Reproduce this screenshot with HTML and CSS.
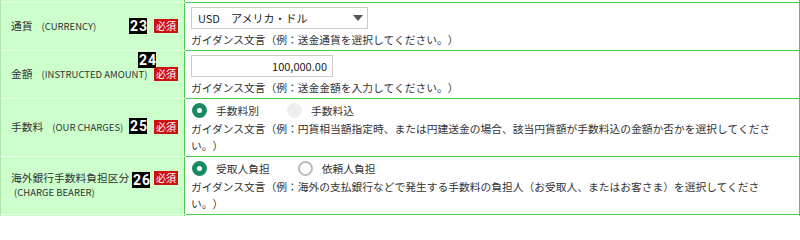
FILE: index.html
```html
<!DOCTYPE html>
<html lang="ja">
<head>
<meta charset="utf-8">
<title>送金入力</title>
<link rel="stylesheet" href="styles.css">
</head>
<body>
<table class="form">
  <tr class="prev"><th></th><td></td></tr>
  <tr>
    <th>
      <div class="lbl">
        <span class="name">通貨<span class="en">(CURRENCY)</span></span>
        <span class="req">必須<span class="mk mk-23">23</span></span>
      </div>
    </th>
    <td>
      <div class="select"><span>USD　アメリカ・ドル</span><span class="caret"></span></div>
      <p class="guide">ガイダンス文言（例：送金通貨を選択してください。）</p>
    </td>
  </tr>
  <tr>
    <th>
      <div class="lbl">
        <span class="name">金額<span class="en">(INSTRUCTED AMOUNT)</span></span>
        <span class="req">必須<span class="mk mk-24">24</span></span>
      </div>
    </th>
    <td>
      <input class="amount" type="text" value="100,000.00" readonly>
      <p class="guide">ガイダンス文言（例：送金金額を入力してください。）</p>
    </td>
  </tr>
  <tr>
    <th>
      <div class="lbl">
        <span class="name">手数料<span class="en">(OUR CHARGES)</span></span>
        <span class="req">必須<span class="mk mk-25">25</span></span>
      </div>
    </th>
    <td class="td-radio">
      <div class="radios">
        <span class="radio"><span class="dot on"></span>手数料別</span>
        <span class="radio"><span class="dot dis"></span>手数料込</span>
      </div>
      <p class="guide">ガイダンス文言（例：円貨相当額指定時、または円建送金の場合、該当円貨額が手数料込の金額か否かを選択してください。）</p>
    </td>
  </tr>
  <tr>
    <th>
      <div class="lbl lbl-top">
        <span class="name">海外銀行手数料負担区分<span class="en en-block">(CHARGE BEARER)</span></span>
        <span class="req">必須<span class="mk mk-26">26</span></span>
      </div>
    </th>
    <td class="td-radio">
      <div class="radios">
        <span class="radio"><span class="dot on"></span>受取人負担</span>
        <span class="radio"><span class="dot off"></span>依頼人負担</span>
      </div>
      <p class="guide">ガイダンス文言（例：海外の支払銀行などで発生する手数料の負担人（お受取人、またはお客さま）を選択してください。）</p>
    </td>
  </tr>
  <tr class="prev"><th></th><td></td></tr>
</table>
</body>
</html>
```

FILE: styles.css
```css
* { box-sizing: border-box; }
html, body { margin: 0; padding: 0; background: #fff; }
body {
  font-family: "Noto Sans CJK JP", "Noto Sans", sans-serif;
  font-size: 10.75px;
  color: #333;
}
.form {
  border-collapse: collapse;
  width: 800px;
  table-layout: fixed;
}
.form th {
  width: 184px;
  background: #ccffcc;
  border-top: 1px solid #e4ffe4;
  border-bottom: 1px solid #e4ffe4;
  border-left: 1px solid #a8e6a8;
  border-right: none;
  font-weight: normal;
  text-align: left;
  padding: 0 6px 0 10px;
  vertical-align: middle;
}
.form td {
  border: 1px solid #4ccc4c;
  padding: 4px 22px 2px 6px;
  vertical-align: top;
  background: #fff;
}
.form .prev th, .form .prev td {
  height: 2px;
  padding: 0;
}
.form tr.prev:first-child th, .form tr.prev:first-child td { border-top: none; }
.form tr.prev:last-child th, .form tr.prev:last-child td { border-bottom: none; }

.lbl { display: flex; align-items: center; }
.lbl-top { align-items: flex-start; }
.name { flex: 1; line-height: 15px; white-space: nowrap; }
.en { font-size: 9.5px; margin-left: 9px; }
.en-block { display: block; margin-left: 3px; }
.req {
  position: relative;
  flex: none;
  width: 24px;
  height: 14px;
  background: #cc1111;
  color: #fff;
  font-size: 10px;
  line-height: 14px;
  text-align: center;
}
.lbl-top .req { margin-top: 1px; }
.mk {
  position: absolute;
  width: 18px;
  height: 16px;
  background: #000;
  color: #fff;
  font-family: Roboto, "Liberation Sans", sans-serif;
  font-weight: 700;
  font-size: 14px;
  line-height: 16px;
  letter-spacing: 1px;
  text-indent: 1px;
  text-align: center;
}
.mk-23 { right: calc(100% + 7px); top: -1px; }
.mk-24 { right: calc(100% - 2px); bottom: calc(100% - 1px); }
.mk-25 { right: calc(100% + 7px); top: -2px; }
.mk-26 { right: calc(100% + 4px); top: 1px; }

.select {
  display: flex;
  align-items: center;
  justify-content: space-between;
  width: 177px;
  height: 22px;
  border: 1px solid #cccccc;
  padding: 0 4px 0 6px;
  font-size: 11px;
  color: #222;
  background: #fff;
}
.caret {
  width: 0;
  height: 0;
  border-left: 5px solid transparent;
  border-right: 5px solid transparent;
  border-top: 6px solid #555;
}
.amount {
  display: block;
  width: 142px;
  height: 22px;
  margin: 0;
  border: 1px solid #cccccc;
  padding: 0 5px 0 0;
  text-align: right;
  font-family: inherit;
  font-size: 11px;
  color: #222;
  background: #fff;
  outline: none;
}
.guide {
  margin: 2px 0 0;
  line-height: 17px;
  text-spacing-trim: space-all;
}
.td-radio { padding-bottom: 1px; }
.td-radio .guide { margin-top: 1px; }
.radios {
  display: flex;
  align-items: center;
  height: 16px;
}
.radio {
  display: flex;
  align-items: center;
  margin-right: 27px;
  line-height: 16px;
}
.dot {
  width: 15px;
  height: 15px;
  border-radius: 50%;
  margin: 0 9px 0 1px;
  flex: none;
}
.dot.on { border: 5px solid #1a8a66; background: #fff; }
.dot.off { border: 2px solid #bbbbbb; background: #fff; }
.dot.dis { background: #eeeeee; }
```
